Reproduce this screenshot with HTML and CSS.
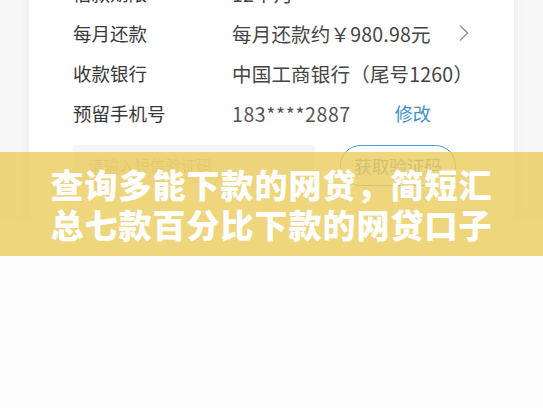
FILE: index.html
```html
<!DOCTYPE html>
<html lang="zh-CN">
<head>
    <meta charset="UTF-8">
    <meta name="viewport" content="width=device-width, initial-scale=1.0">
    <title>查询多能下款的网贷</title>
    <link rel="stylesheet" href="styles.css">
</head>
<body>

    <div class="page">
        <div class="card">
            <div class="row">
                <span class="label">借款期限</span>
                <span class="value">12个月</span>
            </div>
            <div class="row">
                <span class="label">每月还款</span>
                <span class="value">每月还款约￥980.98元</span>
                <svg class="chevron" width="12" height="18" viewBox="0 0 12 18">
                    <path d="M2 1.5 L9.5 9 L2 16.5" fill="none" stroke="#9a9a9a" stroke-width="1.6"/>
                </svg>
            </div>
            <div class="row">
                <span class="label">收款银行</span>
                <span class="value">中国工商银行（尾号1260）</span>
            </div>
            <div class="row">
                <span class="label">预留手机号</span>
                <span class="value phone">183****2887</span>
                <a class="edit">修改</a>
            </div>
            <div class="code-row">
                <div class="code-input">请输入短信验证码</div>
                <button class="code-btn">获取验证码</button>
            </div>
        </div>
        <div class="below"></div>

        <div class="banner">
            <h1>查询多能下款的网贷，简短汇<br>总七款百分比下款的网贷口子</h1>
        </div>
    </div>

</body>
</html>
```

FILE: styles.css
```css
* {
    box-sizing: border-box;
}

body {
    margin: 0;
    font-family: "Noto Sans CJK SC", "Noto Sans", sans-serif;
    background: #f6f6f6;
    overflow: hidden;
}

.page {
    position: relative;
    width: 543px;
    height: 408px;
    overflow: hidden;
}

.card {
    margin: -27px 29px 0;
    width: 485px;
    background: #fff;
    border-radius: 10px;
    box-shadow: 0 2px 12px rgba(0, 0, 0, 0.05);
    padding: 0 44px 35px;
}

.row {
    display: flex;
    align-items: center;
    height: 40px;
    font-size: 18.5px;
    color: #383838;
}

.label {
    width: 159px;
    flex-shrink: 0;
}

.value {
    flex-shrink: 0;
    white-space: nowrap;
    color: #444;
    font-size: 19.5px;
    letter-spacing: 0.2px;
}

.phone {
    color: #555;
    letter-spacing: 0.6px;
}

.chevron {
    flex-shrink: 0;
    margin-left: 27px;
}

.edit {
    margin-left: 44px;
    color: #3d8fcf;
    font-size: 18px;
}

.code-row {
    display: flex;
    align-items: center;
    margin-top: 12px;
    height: 40px;
}

.code-input {
    width: 242px;
    height: 40px;
    background: #f5f5f5;
    border-radius: 4px;
    padding-left: 15px;
    line-height: 40px;
    font-size: 15.5px;
    color: #bdbdbd;
}

.code-btn {
    margin-left: 25px;
    width: 116px;
    height: 41px;
    border: 1.5px solid #4a9ad6;
    border-radius: 21px;
    background: #fff;
    color: #3d8fcf;
    font-family: inherit;
    font-size: 17.5px;
    padding: 0;
}

.below {
    height: 200px;
    background: #fdfdfd;
}

.banner {
    position: absolute;
    top: 152px;
    left: 0;
    width: 543px;
    height: 104px;
    background: rgba(236, 205, 95, 0.82);
    display: flex;
    align-items: center;
    justify-content: center;
}

.banner h1 {
    margin: 0;
    color: #fff;
    font-size: 33px;
    font-weight: 900;
    letter-spacing: 1px;
    line-height: 40px;
    text-align: center;
}
```
